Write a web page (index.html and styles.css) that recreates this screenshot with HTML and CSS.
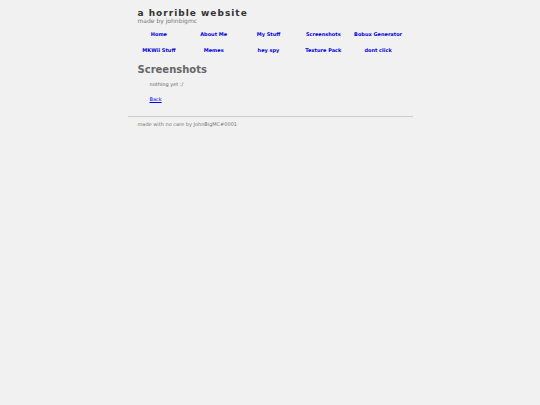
FILE: index.html
```
<!DOCTYPE html>
<html lang="en">
<head>
    <meta charset="UTF-8">
    <meta name="viewport" content="width=device-width, initial-scale=1.0">
    <title>a horrible website</title>
    <link rel="stylesheet" href="styles.css">
</head>
<body>
    <div class="container">
        <header>
            <h1>a horrible website</h1>
            <p class="tagline">made by johnbigmc</p>
        </header>
        <nav>
            <a href="#">Home</a>
            <a href="#">About Me</a>
            <a href="#">My Stuff</a>
            <a href="#">Screenshots</a>
            <a href="#">Bobux Generator</a>
            <a href="#">MKWii Stuff</a>
            <a href="#">Memes</a>
            <a href="#">hey spy</a>
            <a href="#">Texture Pack</a>
            <a href="#">dont click</a>
        </nav>
        <main>
            <h2>Screenshots</h2>
            <p>nothing yet :/</p>
            <p><a href="#">Back</a></p>
        </main>
        <footer>made with no care by JohnBigMC#0001</footer>
    </div>
</body>
</html>
```
FILE: styles.css
```
body {
    margin: 0;
    background: #f1f1f1;
    color: #666;
    font-family: "DejaVu Sans", Verdana, sans-serif;
    font-size: 5px;
    line-height: 7px;
}
.container {
    max-width: 285px;
    margin: 0 auto;
    padding-top: 9px;
}
header {
    padding: 0 10px;
}
h1 {
    margin: 0;
    color: #333;
    font-size: 9px;
    line-height: 8px;
    letter-spacing: 1px;
}
.tagline {
    margin: 0;
    color: #777;
    font-size: 6px;
    line-height: 7px;
}
nav {
    display: grid;
    grid-template-columns: repeat(5, 1fr);
    row-gap: 9px;
    margin-top: 7px;
    padding: 0 7px 0 4px;
    text-align: center;
    font-weight: bold;
}
nav a {
    color: #0000dd;
    text-decoration: none;
    white-space: nowrap;
}
main {
    padding: 0 10px;
}
h2 {
    margin: 10px 0 5px;
    font-size: 10px;
    line-height: 12px;
}
main p {
    margin: 0 0 8px 12px;
}
main a {
    color: #0000ee;
}
footer {
    margin-top: 13px;
    padding: 4px 10px;
    border-top: 1px solid #ccc;
    color: #777;
}
```
